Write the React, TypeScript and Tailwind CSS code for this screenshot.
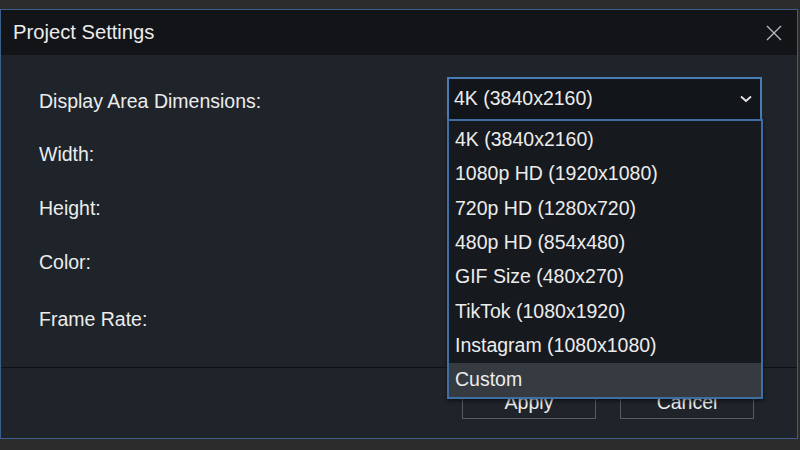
import React from "react";

const options = [
  "4K (3840x2160)",
  "1080p HD (1920x1080)",
  "720p HD (1280x720)",
  "480p HD (854x480)",
  "GIF Size (480x270)",
  "TikTok (1080x1920)",
  "Instagram (1080x1080)",
  "Custom",
];

export default function App() {
  return (
    <div
      className="w-[800px] h-[450px] bg-[#2c2c2d] pt-[9px] text-[#ececec]"
      style={{ fontFamily: '"Liberation Sans", Arial, sans-serif' }}
    >
      <div className="relative w-[798px] h-[430px] border border-[#3b5e8a] bg-[#1f242a] flex flex-col">
        <div className="h-[45px] bg-[#121418] flex items-center justify-between pl-[12px] pr-[15px]">
          <span className="text-[20.2px] leading-none">Project Settings</span>
          <svg width="16" height="16" viewBox="0 0 16 16" className="text-[#b9bcc0]">
            <path d="M1 1 L15 15 M15 1 L1 15" stroke="currentColor" strokeWidth="1.3" fill="none" />
          </svg>
        </div>
        <div className="flex-1 pl-[38px] pt-[22px] text-[19.5px]">
          <div className="flex items-center h-[43px]">
            <span className="w-[408px] pt-[6px]">Display Area Dimensions:</span>
            <div className="relative w-[315px] h-[44px]">
              <div className="h-full border-2 border-[#4a7bb2] bg-[#121519] flex items-center justify-between pl-[5px] pr-[8px]">
                <span>4K (3840x2160)</span>
                <svg width="12" height="8" viewBox="0 0 12 8">
                  <polyline points="1,1.5 6,6 11,1.5" stroke="#e6e6e6" strokeWidth="1.8" fill="none" />
                </svg>
              </div>
              <div className="absolute left-0 top-[42px] w-[316px] z-10 border-2 border-[#3f6ea4] bg-[#16191e] pt-[2px] shadow-[0_2px_4px_rgba(0,0,0,0.5)]">
                {options.map((o) => (
                  <div
                    key={o}
                    className={
                      "h-[34.3px] flex items-center pl-[6px] " +
                      (o === "Custom" ? "bg-[#363b41]" : "")
                    }
                  >
                    {o}
                  </div>
                ))}
              </div>
            </div>
          </div>
          <div className="h-[8px]" />
          <div className="h-[54px] flex items-center">Width:</div>
          <div className="h-[54px] flex items-center">Height:</div>
          <div className="h-[54px] flex items-center">Color:</div>
          <div className="h-[3px]" />
          <div className="h-[54px] flex items-center">Frame Rate:</div>
        </div>
        <div className="h-[71px] border-t border-[#0f1215] flex justify-end items-start pt-[21px] pr-[43px] gap-[24px] text-[19.5px]">
          <button className="w-[134px] h-[30px] leading-none flex items-center justify-center pb-[3px] border border-[#575b60] text-[#ececec]">Apply</button>
          <button className="w-[134px] h-[30px] leading-none flex items-center justify-center pb-[3px] border border-[#575b60] text-[#ececec]">Cancel</button>
        </div>
      </div>
    </div>
  );
}
